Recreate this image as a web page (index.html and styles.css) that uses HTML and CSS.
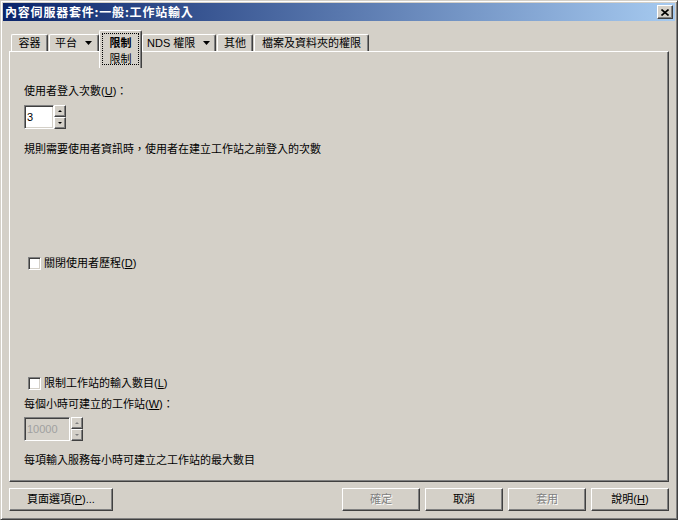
FILE: index.html
```html
<!DOCTYPE html>
<html>
<head>
<meta charset="utf-8">
<link rel="stylesheet" href="styles.css">
</head>
<body>
<div class="window">
  <div class="titlebar">
    <span class="title">內容伺服器套件:一般:工作站輸入</span>
    <div class="close"><svg width="8" height="7" viewBox="0 0 8 7"><path d="M0.5 0.5L7.5 6.5M7.5 0.5L0.5 6.5" stroke="#000" stroke-width="1.6" fill="none"/></svg></div>
  </div>
  <div class="content">
    <div class="tabs">
      <div class="tab w1">容器</div>
      <div class="tab w2 dd"><span>平台</span><svg class="dd-arrow" width="7" height="4" viewBox="0 0 7 4"><path d="M0 0H7L3.5 4Z"/></svg></div>
      <div class="tab sel w3"><div class="focus"><b>限制</b><span>限制</span></div></div>
      <div class="tab w4 dd nds"><span>NDS 權限</span><svg class="dd-arrow" width="7" height="4" viewBox="0 0 7 4"><path d="M0 0H7L3.5 4Z"/></svg></div>
      <div class="tab w5">其他</div>
      <div class="tab w6">檔案及資料夾的權限</div>
    </div>
    <div class="panel">
      <div class="label l1">使用者登入次數(<u>U</u>)：</div>
      <div class="spin s1">
        <div class="field f1">3</div>
        <div class="arrows">
          <div class="sbtn"><span class="up"></span></div>
          <div class="sbtn"><span class="down"></span></div>
        </div>
      </div>
      <div class="label d1">規則需要使用者資訊時，使用者在建立工作站之前登入的次數</div>
      <div class="check c1"><span class="box"></span><span>關閉使用者歷程(<u>D</u>)</span></div>
      <div class="check c2"><span class="box"></span><span>限制工作站的輸入數目(<u>L</u>)</span></div>
      <div class="label l2">每個小時可建立的工作站(<u>W</u>)：</div>
      <div class="spin s2">
        <div class="field f2 disabled">10000</div>
        <div class="arrows">
          <div class="sbtn"><span class="up dis"></span></div>
          <div class="sbtn"><span class="down dis"></span></div>
        </div>
      </div>
      <div class="label d2">每項輸入服務每小時可建立之工作站的最大數目</div>
    </div>
    <div class="buttons">
      <div class="btn wide">頁面選項(<u>P</u>)...</div>
      <div class="right">
        <div class="btn off">確定</div>
        <div class="btn">取消</div>
        <div class="btn off">套用</div>
        <div class="btn">說明(<u>H</u>)</div>
      </div>
    </div>
  </div>
</div>
</body>
</html>
```
FILE: styles.css
```css
* { box-sizing: border-box; }
html, body { margin: 0; padding: 0; }
body {
  width: 678px;
  height: 520px;
  overflow: hidden;
  background: #d4d0c8;
  font-family: "Liberation Sans", "Noto Sans CJK TC", sans-serif;
  font-size: 11px;
  line-height: 13px;
  color: #000;
}
u { text-decoration: underline; text-underline-offset: 1px; }

.window {
  width: 678px;
  height: 520px;
  border: 1px solid;
  border-color: #d4d0c8 #404040 #404040 #d4d0c8;
  box-shadow: inset 1px 1px #fff, inset -1px -1px #808080;
  padding: 2px;
  display: flex;
  flex-direction: column;
}

.titlebar {
  height: 18px;
  background: linear-gradient(to right, #0a246a 0%, #a6caf0 100%);
  display: flex;
  align-items: center;
  padding: 0 2px;
}
.title {
  flex: 1;
  color: #fff;
  font-family: "Noto Sans CJK TC", sans-serif;
  font-weight: bold;
  font-size: 12px;
  line-height: 18px;
  letter-spacing: 0.8px;
}
.close {
  width: 16px;
  height: 14px;
  background: #d4d0c8;
  border: 1px solid;
  border-color: #fff #404040 #404040 #fff;
  box-shadow: inset -1px -1px #808080;
  display: flex;
  align-items: center;
  justify-content: center;
}

.content {
  flex: 1;
  display: flex;
  flex-direction: column;
  padding: 0 6px 6px;
}

.tabs {
  display: flex;
  align-items: flex-end;
  gap: 1px;
  height: 21px;
  margin-top: 9px;
  padding-left: 2px;
  position: relative;
  z-index: 2;
}
.tab {
  height: 17px;
  background: #d4d0c8;
  border-top: 1px solid #fff;
  border-left: 1px solid #fff;
  border-right: 1px solid #404040;
  box-shadow: inset -1px 0 #808080;
  border-radius: 2px 2px 0 0;
  display: flex;
  align-items: center;
  justify-content: center;
  white-space: nowrap;
}
.w1 { width: 37px; }
.w2 { width: 50px; }
.w3 { width: 43px; }
.w4 { width: 74px; }
.w5 { width: 36px; }
.w6 { width: 115px; }
.tab.dd { justify-content: flex-start; padding-left: 5px; }
.tab.nds { padding-left: 4px; }
.dd-arrow { margin-left: 8px; fill: #000; }

.tab.sel {
  height: 38px;
  margin: 0 -1px -17px -1px;
  padding: 2px 2px 3px 2px;
  align-items: stretch;
}
.focus {
  flex: 1;
  border: 1px dotted #000;
  display: flex;
  flex-direction: column;
  align-items: center;
  gap: 3px;
  padding-top: 3px;
}
.focus b { font-weight: bold; }

.panel {
  height: 431px;
  border: 1px solid;
  border-color: #fff #404040 #404040 #fff;
  box-shadow: inset -1px -1px #808080;
  padding-left: 14px;
  display: flex;
  flex-direction: column;
  align-items: flex-start;
  position: relative;
  z-index: 1;
}
.label { white-space: nowrap; }
.l1 { margin-top: 33px; }
.s1 { margin-top: 7px; }
.d1 { margin-top: 14px; }
.c1 { margin-top: 101px; }
.c2 { margin-top: 107px; }
.l2 { margin-top: 8px; }
.s2 { margin-top: 6px; }
.d2 { margin-top: 13px; }

.check {
  display: flex;
  align-items: center;
  gap: 3px;
  margin-left: 4px;
  height: 13px;
}
.box {
  width: 13px;
  height: 13px;
  background: #fff;
  border: 1px solid;
  border-color: #808080 #fff #fff #808080;
  box-shadow: inset 1px 1px #404040, inset -1px -1px #d4d0c8;
}

.spin { display: flex; height: 24px; }
.s2 { gap: 1px; }
.field {
  height: 24px;
  background: #fff;
  border: 1px solid;
  border-color: #808080 #fff #fff #808080;
  box-shadow: inset 1px 1px #404040, inset -1px -1px #d4d0c8;
  padding-left: 2px;
  display: flex;
  align-items: center;
}
.f1 { width: 30px; }
.f2 { width: 46px; }
.field.disabled { background: #d4d0c8; color: #a0a0a0; }
.arrows { display: flex; flex-direction: column; width: 12px; }
.sbtn {
  height: 12px;
  background: #d4d0c8;
  border: 1px solid;
  border-color: #fff #404040 #404040 #fff;
  box-shadow: inset -1px -1px #808080;
  display: flex;
  align-items: center;
  justify-content: center;
}
.up { width: 0; height: 0; border-left: 2px solid transparent; border-right: 2px solid transparent; border-bottom: 2px solid #000; }
.down { width: 0; height: 0; border-left: 2px solid transparent; border-right: 2px solid transparent; border-top: 2px solid #000; }
.up.dis { border-bottom-color: #808080; }
.down.dis { border-top-color: #808080; }

.buttons {
  display: flex;
  justify-content: space-between;
  margin-top: 6px;
  height: 23px;
}
.right { display: flex; gap: 5px; }
.btn {
  width: 78px;
  height: 23px;
  background: #d4d0c8;
  border: 1px solid;
  border-color: #fff #404040 #404040 #fff;
  box-shadow: inset -1px -1px #808080;
  display: flex;
  align-items: center;
  justify-content: center;
  white-space: nowrap;
}
.btn.wide { width: 104px; }
.btn.off { color: #808080; text-shadow: 1px 1px #fff; }
```
